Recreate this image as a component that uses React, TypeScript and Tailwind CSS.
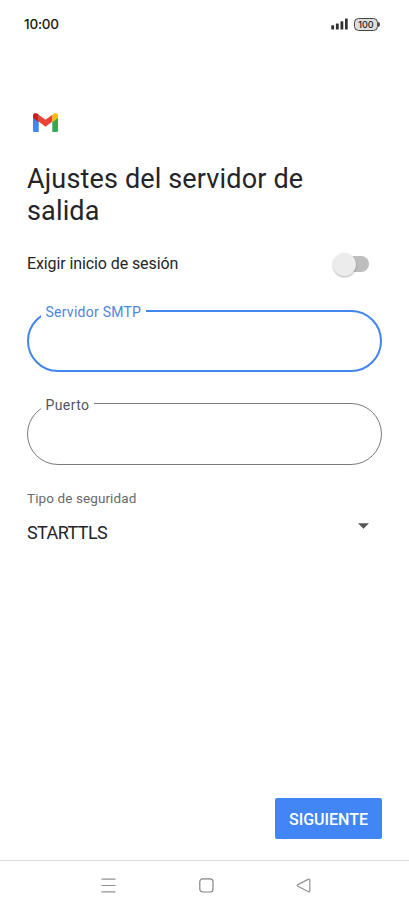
type FieldProps = {
  id: string;
  label: string;
  focused?: boolean;
};

function StatusBar() {
  return (
    <div className="flex h-12 items-center justify-between pr-[31px] pl-6">
      <span className="font-['Inter'] text-[13.5px] leading-4 font-medium tracking-[-0.2px] text-[#161616]">
        10:00
      </span>
      <div className="flex items-center gap-1.5">
        <svg width="17" height="12" viewBox="0 0 17 12" fill="#303030" aria-hidden>
          <rect x="0.3" y="7.3" width="2.8" height="4.2" rx="0.6" />
          <rect x="4.9" y="5.5" width="2.8" height="6" rx="0.6" />
          <rect x="9.5" y="3.2" width="2.8" height="8.3" rx="0.6" />
          <rect x="14" y="0.4" width="2.7" height="11.1" rx="0.6" />
        </svg>
        <span className="relative flex h-[13px] w-6 items-center justify-center rounded-[4.5px] border border-[#444] bg-[#dedede] font-['Inter'] text-[9px] leading-none font-medium text-[#222] after:absolute after:-right-[2.5px] after:h-[5px] after:w-[1.5px] after:rounded-r-sm after:bg-[#555]">
          100
        </span>
      </div>
    </div>
  );
}

function GmailLogo() {
  return (
    <svg width="25" height="19" viewBox="0 0 25 19" aria-label="Gmail">
      <path fill="#4285f4" d="M0 4.2 5.7 8.5V19H1.6A1.6 1.6 0 0 1 0 17.4Z" />
      <path fill="#34a853" d="M25 4.2 19.3 8.5V19h4.1a1.6 1.6 0 0 0 1.6-1.6Z" />
      <path fill="#ea4335" d="m5.7 1.7 6.8 5.1 6.8-5.1v6.8l-6.8 5.2-6.8-5.2Z" />
      <path fill="#c5221f" d="M0 2.6v2.3l5.7 4.3V1.7L4.4.7C2.6-.6 0 .4 0 2.6Z" />
      <path fill="#fbbc04" d="M25 2.6v2.3l-5.7 4.3V1.7L20.6.7C22.4-.6 25 .4 25 2.6Z" />
    </svg>
  );
}

function OutlinedField({ id, label, focused = false }: FieldProps) {
  return (
    <div className="relative h-[62px]">
      <input
        id={id}
        className={
          focused
            ? "block h-full w-full rounded-full border-2 border-[#4285ec] px-6 text-base outline-none"
            : "block h-full w-full rounded-full border border-[#7b7b7e] px-6 text-base outline-none"
        }
      />
      <label
        htmlFor={id}
        className={
          focused
            ? "absolute -top-2 left-3.5 w-[105px] bg-white pl-[4.5px] text-sm leading-5 tracking-[0.25px] whitespace-nowrap text-[#4d86dc]"
            : "absolute -top-2 left-3.5 w-[53px] bg-white pl-[4.5px] text-sm leading-5 tracking-[0.4px] whitespace-nowrap text-[#55565b]"
        }
      >
        {label}
      </label>
    </div>
  );
}

function NavigationBar() {
  return (
    <nav className="flex h-[50px] items-center border-t border-[#dadada] pl-[101px]">
      <svg width="15" height="15" viewBox="0 0 15 15" stroke="#929292" strokeWidth="1.2" aria-hidden>
        <path d="M.5 1.2h14M.5 7.5h14M.5 13.8h14" />
      </svg>
      <svg className="ml-[83px]" width="15" height="15" viewBox="0 0 15 15" fill="none" stroke="#858585" strokeWidth="1.2" aria-hidden>
        <rect x="0.8" y="0.8" width="13.2" height="13.2" rx="3" />
      </svg>
      <svg className="ml-[82px]" width="15" height="15" viewBox="0 0 15 15" fill="none" stroke="#929292" strokeWidth="1.2" strokeLinejoin="round" aria-hidden>
        <path d="M12.6 1.1 1.9 6.6q-1.4.8 0 1.7l10.7 5.5q1.2.4 1.2-.9V2q0-1.3-1.2-.9Z" />
      </svg>
    </nav>
  );
}

export default function App() {
  return (
    <div className="flex h-[910px] w-full flex-col bg-white font-['Roboto',sans-serif] text-[#242528]">
      <StatusBar />
      <main className="flex flex-1 flex-col px-[27px]">
        <div className="mt-[65px] pl-1.5">
          <GmailLogo />
        </div>
        <h1 className="mt-[31px] text-[27px] leading-8 tracking-[0.15px]">
          Ajustes del servidor de
          <br />
          salida
        </h1>

        <div className="mt-6 flex h-[26px] items-center justify-between pr-[13px]">
          <span className="text-base tracking-[-0.1px]">Exigir inicio de sesión</span>
          <button type="button" role="switch" aria-checked={false} aria-label="Exigir inicio de sesión" className="flex h-4 w-[34px] items-center rounded-full bg-[#bdbdbd]">
            <span className="-ml-0.5 size-[23px] shrink-0 rounded-full bg-[#ececec] shadow-[0_1px_2px_rgba(0,0,0,0.3)]" />
          </button>
        </div>

        <div className="mt-[33px] flex flex-col gap-[31px]">
          <OutlinedField id="smtp" label="Servidor SMTP" focused />
          <OutlinedField id="port" label="Puerto" />
        </div>

        <div className="mt-[23px] text-[13.5px] leading-5 tracking-[0.1px] text-[#68696d]">Tipo de seguridad</div>
        <div className="mt-[13px] flex h-6 justify-between pr-[13px]">
          <span className="text-lg leading-6 tracking-[-0.6px]">STARTTLS</span>
          <svg className="mt-0.5" width="11" height="6" viewBox="0 0 12 6" fill="#555" aria-hidden>
            <path d="M0 0h12L6 6Z" />
          </svg>
        </div>

        <button type="button" className="mt-auto mb-[21px] h-[41px] w-[107px] self-end rounded-xs bg-[#4285f4] pt-0.5 text-base font-medium text-white">
          SIGUIENTE
        </button>
      </main>
      <NavigationBar />
    </div>
  );
}
